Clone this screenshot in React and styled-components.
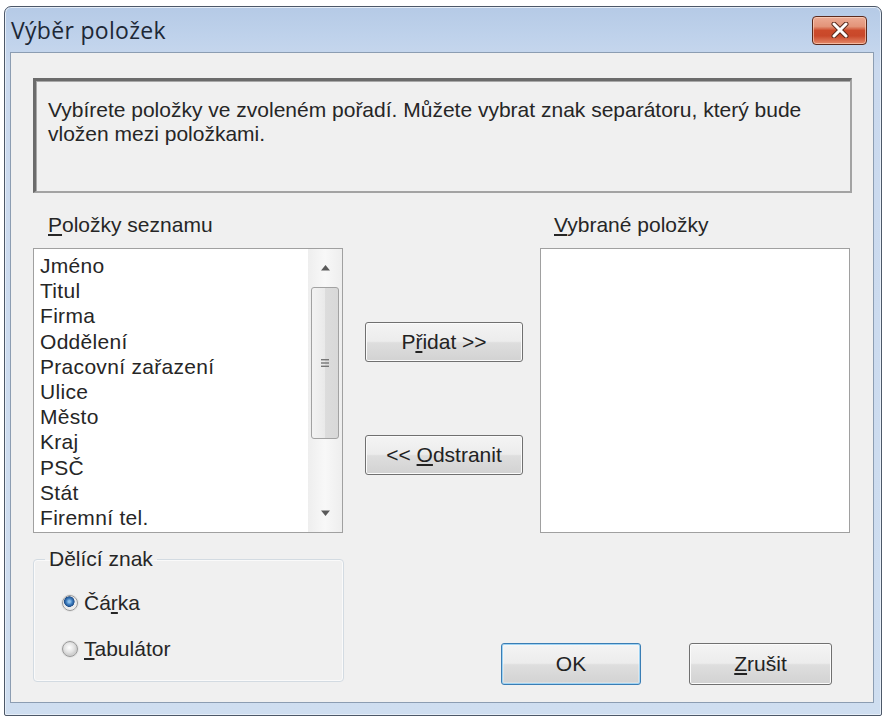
import React from "react";
import styled, { createGlobalStyle } from "styled-components";

const Global = createGlobalStyle`
  html, body { margin: 0; padding: 0; background: #ffffff; }
  body { font-family: "Liberation Sans", Arial, sans-serif; }
  * { box-sizing: border-box; }
`;

const Window = styled.div`
  margin: 6px 0 0 4px;
  width: 878px;
  height: 710px;
  border: 1px solid #4d5868;
  border-radius: 7px 7px 2px 2px;
  background: linear-gradient(180deg, #b5cae6 0px, #bfd2eb 30px, #cad9ee 60px, #cfdef0 100%);
  display: flex;
  flex-direction: column;
  padding: 0 7px 12px 5px;
  box-shadow: inset 0 0 0 1px #e6eef8;
`;

const TitleBar = styled.div`
  height: 45px;
  display: flex;
  align-items: center;
  justify-content: space-between;
  padding-left: 1px;
`;

const Title = styled.div`
  font-family: "Open Sans", "Noto Sans", sans-serif;
  font-size: 23px;
  color: #1d2836;
  letter-spacing: 0.3px;
  line-height: 28px;
`;

const CloseBtn = styled.div`
  width: 55px;
  height: 29px;
  margin-right: 7px;
  margin-top: 1px;
  border: 1px solid #5b2a1d;
  border-radius: 4px;
  background: linear-gradient(180deg, #ecab95 0%, #e39479 35%, #cc4a2b 50%, #c9482a 70%, #e58a6b 100%);
  box-shadow: inset 0 0 0 1px rgba(255, 220, 200, 0.6);
  display: flex;
  align-items: center;
  justify-content: center;
`;

const Content = styled.div`
  flex: 1;
  background: #f0f0f0;
  border: 1px solid #8c9db2;
  padding: 25px 21px 0 22px;
  display: flex;
  flex-direction: column;
  color: #222;
  font-family: "Liberation Sans", Arial, sans-serif;
  font-size: 21px;
`;

const InfoBox = styled.div`
  width: 819px;
  height: 115px;
  border-top: 3px solid #6b6b6b;
  border-left: 3px solid #6b6b6b;
  border-right: 2px solid #a3a3a3;
  border-bottom: 2px solid #a3a3a3;
  box-shadow: inset 1px 1px 0 #a8a8a8;
  background: #f0f0f0;
  padding: 17px 10px 0 12px;
  line-height: 24px;
  color: #262626;
`;

const Columns = styled.div`
  display: grid;
  grid-template-columns: 310px 197px 310px;
  margin-top: 20px;
`;

const Label = styled.div`
  line-height: 24px;
  height: 22px;
  padding-left: ${(p) => p.$indent}px;
  margin-bottom: 13px;
  color: #262626;
  white-space: nowrap;
`;

const ListBox = styled.div`
  height: 285px;
  background: #ffffff;
  border: 1px solid #a0a0a0;
  display: flex;
`;

const Items = styled.div`
  flex: 1;
  padding: 4px 0 0 6px;
  line-height: 25.2px;
  letter-spacing: 0.3px;
  color: #262626;
  overflow: hidden;
`;

const Item = styled.div`
  white-space: nowrap;
`;

const ScrollBar = styled.div`
  width: 34px;
  display: flex;
  flex-direction: column;
  background: linear-gradient(90deg, #eeeeee, #f8f8f8 50%, #eeeeee);
`;

const ArrowBtn = styled.div`
  height: 37px;
  display: flex;
  align-items: center;
  justify-content: center;
`;

const Track = styled.div`
  flex: 1;
  padding-top: 1px;
`;

const Thumb = styled.div`
  width: 28px;
  height: 152px;
  margin: 0 auto;
  border: 1px solid #a2a2a2;
  border-radius: 3px;
  background: linear-gradient(90deg, #f3f3f3, #e9e9e9 50%, #dcdcdc 52%, #d8d8d8);
  display: flex;
  align-items: center;
  justify-content: center;
`;

const Middle = styled.div`
  display: flex;
  flex-direction: column;
  align-items: center;
  padding-top: 109px;
  padding-left: 5px;
  gap: 73px;
`;

const Button = styled.div`
  width: ${(p) => p.$w}px;
  height: ${(p) => p.$h}px;
  border: 1px solid ${(p) => (p.$default ? "#3a7db4" : "#707070")};
  border-radius: 3px;
  background: linear-gradient(180deg, #f4f4f4 0%, #ececec 48%, #dedede 52%, #d2d2d2 100%);
  box-shadow: ${(p) =>
    p.$default
      ? "inset 0 0 0 1px #9fd3f3, inset 0 0 0 2px #ffffff44"
      : "inset 0 0 0 1px #fbfbfb"};
  display: flex;
  align-items: center;
  justify-content: center;
  color: #222;
  white-space: pre;
`;

const U = styled.span`
  text-decoration: underline;
  text-underline-offset: 2px;
`;

const BottomRow = styled.div`
  display: grid;
  grid-template-columns: 311px 1fr;
  margin-top: 14px;
  align-items: end;
`;

const Group = styled.fieldset`
  margin: 0;
  border: 1px solid #d3dbe2;
  border-radius: 4px;
  padding: 19px 0 19px 28px;
  display: flex;
  flex-direction: column;
  gap: 20px;
  box-shadow: inset 0 0 0 1px #fafafa;
`;

const Legend = styled.legend`
  margin-left: -17px;
  padding: 0 4px;
  line-height: 24px;
  color: #262626;
`;

const RadioRow = styled.label`
  display: flex;
  align-items: center;
  gap: 6px;
  height: 26px;
  color: #262626;
`;

const RadioDot = styled.span`
  width: 16px;
  height: 16px;
  border-radius: 50%;
  border: 1px solid #9a9a9a;
  background: ${(p) =>
    p.$checked
      ? "radial-gradient(circle at 45% 40%, #8fc0ea 0 1px, #3f7fc0 3px, #1f4f8c 5px, #eaeaea 5.5px, #f4f4f4 100%)"
      : "radial-gradient(circle at 45% 40%, #ffffff 0, #e2e2e2 5px, #d0d0d0 7px)"};
  box-shadow: 0 0 0 1px #e4e4e4;
`;

const Actions = styled.div`
  display: flex;
  justify-content: flex-end;
  gap: 48px;
  padding-right: 20px;
  margin-bottom: -3px;
`;

const items = [
  "Jméno",
  "Titul",
  "Firma",
  "Oddělení",
  "Pracovní zařazení",
  "Ulice",
  "Město",
  "Kraj",
  "PSČ",
  "Stát",
  "Firemní tel.",
];

const UpArrow = () => (
  <svg width="11" height="7" viewBox="0 0 11 7">
    <path d="M1 6.5 L5.5 1 L10 6.5 Z" fill="#5a5a5a" />
  </svg>
);
const DownArrow = () => (
  <svg width="11" height="7" viewBox="0 0 11 7">
    <path d="M1 0.5 L5.5 6 L10 0.5 Z" fill="#5a5a5a" />
  </svg>
);
const Gripper = () => (
  <svg width="10" height="10" viewBox="0 0 10 10">
    <rect x="1" y="1" width="8" height="1.4" fill="#777" />
    <rect x="1" y="4.3" width="8" height="1.4" fill="#777" />
    <rect x="1" y="7.6" width="8" height="1.4" fill="#777" />
  </svg>
);
const CloseX = () => (
  <svg width="18" height="16" viewBox="0 0 18 16">
    <path
      d="M3 2 L15 14 M15 2 L3 14"
      stroke="#5b2a1d"
      strokeWidth="5"
      strokeLinecap="round"
    />
    <path
      d="M3 2 L15 14 M15 2 L3 14"
      stroke="#ffffff"
      strokeWidth="3"
      strokeLinecap="round"
    />
  </svg>
);

export default function App() {
  return (
    <>
      <Global />
      <Window>
        <TitleBar>
          <Title>Výběr položek</Title>
          <CloseBtn>
            <CloseX />
          </CloseBtn>
        </TitleBar>
        <Content>
          <InfoBox>
            Vybírete položky ve zvoleném pořadí. Můžete vybrat znak separátoru, který bude
            vložen mezi položkami.
          </InfoBox>
          <Columns>
            <div>
              <Label $indent={15}>
                <U>P</U>oložky seznamu
              </Label>
              <ListBox>
                <Items>
                  {items.map((it) => (
                    <Item key={it}>{it}</Item>
                  ))}
                </Items>
                <ScrollBar>
                  <ArrowBtn>
                    <UpArrow />
                  </ArrowBtn>
                  <Track>
                    <Thumb>
                      <Gripper />
                    </Thumb>
                  </Track>
                  <ArrowBtn>
                    <DownArrow />
                  </ArrowBtn>
                </ScrollBar>
              </ListBox>
            </div>
            <Middle>
              <Button $w={158} $h={40}>
                <span>
                  P<U>ř</U>idat &gt;&gt;
                </span>
              </Button>
              <Button $w={158} $h={40}>
                <span>
                  {"<< "}
                  <U>O</U>dstranit
                </span>
              </Button>
            </Middle>
            <div>
              <Label $indent={14}>
                <U>V</U>ybrané položky
              </Label>
              <ListBox />
            </div>
          </Columns>
          <BottomRow>
            <Group>
              <Legend>Dělící znak</Legend>
              <RadioRow>
                <RadioDot $checked />
                <span>
                  Čá<U>r</U>ka
                </span>
              </RadioRow>
              <RadioRow>
                <RadioDot />
                <span>
                  <U>T</U>abulátor
                </span>
              </RadioRow>
            </Group>
            <Actions>
              <Button $w={140} $h={42} $default>
                OK
              </Button>
              <Button $w={143} $h={42}>
                <span>
                  <U>Z</U>rušit
                </span>
              </Button>
            </Actions>
          </BottomRow>
        </Content>
      </Window>
    </>
  );
}
